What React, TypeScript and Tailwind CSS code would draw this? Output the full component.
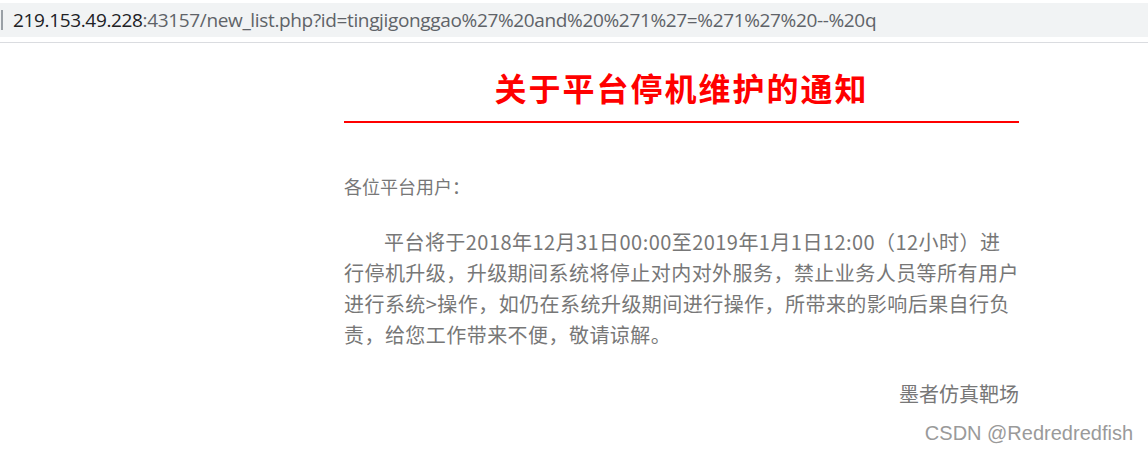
export default function App() {
  const cjk = { fontFamily: '"Noto Sans CJK SC", "Noto Sans", sans-serif' };

  return (
    <div className="relative w-[1148px] h-[452px] bg-white overflow-hidden">
      {/* address bar */}
      <div className="mt-[3px] h-[34px] bg-[#f1f3f4] flex items-center">
        <div className="w-[2px] h-[20px] bg-[#9aa0a6] ml-[1px]" />
        <div
          className="ml-[10px] text-[19px] tracking-[-0.35px] whitespace-nowrap"
          style={{ fontFamily: '"Open Sans", "Noto Sans", sans-serif' }}
        >
          <span className="text-[#202124]">219.153.49.228</span>
          <span className="text-[#5f6368]">:43157/new_list.php?id=tingjigonggao%27%20and%20%271%27=%271%27%20--%20q</span>
        </div>
      </div>
      <div className="mt-[5px] h-px bg-[#dadce0]" />

      {/* notice */}
      <div className="ml-[344px] w-[675px]" style={cjk}>
        <div className="mt-[24px] pb-[14px] border-b-2 border-[#ff0000]">
          <h1 className="text-center text-[32px] leading-[40px] font-bold text-[#ff0000] tracking-[2px]">
            关于平台停机维护的通知
          </h1>
        </div>

        <p className="mt-[49px] text-[18px] leading-[28px] text-[#777777]">各位平台用户：</p>

        <p className="mt-[26px] text-[20px] leading-[31px] text-[#777777] indent-[40px] tracking-[0.45px]">
          平台将于2018年12月31日00:00至2019年1月1日12:00（12小时）进行停机升级，升级期间系统将停止对内对外服务，禁止业务人员等所有用户进行系统&gt;操作，如仍在系统升级期间进行操作，所带来的影响后果自行负责，给您工作带来不便，敬请谅解。
        </p>

        <p className="mt-[28px] text-right text-[20px] leading-[31px] text-[#777777]">墨者仿真靶场</p>
      </div>

      {/* watermark */}
      <div
        className="absolute right-[15px] bottom-[4px] text-[20px] text-[#9a9a9a] [text-shadow:1px_1px_1px_#ffffff]"
        style={{ fontFamily: '"Liberation Sans", Arial, sans-serif' }}
      >
        CSDN @Redredredfish
      </div>
    </div>
  );
}
